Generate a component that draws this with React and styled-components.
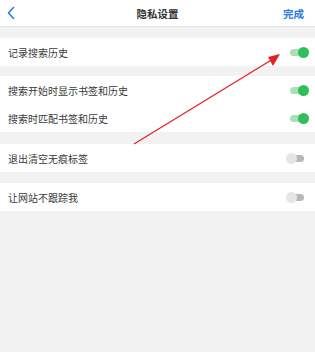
import React from "react";
import styled, { createGlobalStyle } from "styled-components";

const Global = createGlobalStyle`
  html, body { margin: 0; padding: 0; background: #f2f2f2; }
  body { font-family: "Noto Sans CJK SC", "Noto Sans", sans-serif; }
`;

const Page = styled.div`
  position: relative;
  width: 315px;
  height: 352px;
  background: #f2f2f2;
  overflow: hidden;
`;

const Header = styled.div`
  height: 26px;
  background: #fff;
  border-bottom: 1px solid #e2e2e2;
  display: grid;
  grid-template-columns: 40px 1fr 40px;
  align-items: center;
`;

const Back = styled.div`
  display: flex;
  align-items: center;
  padding-left: 6px;
`;

const Title = styled.div`
  text-align: center;
  font-size: 10.5px;
  font-weight: 700;
  color: #333;
`;

const Done = styled.div`
  text-align: right;
  padding-right: 11px;
  font-size: 10.5px;
  font-weight: 700;
  color: #2b7be4;
`;

const Section = styled.div`
  margin-top: ${(p) => p.$gap}px;
  background: #fff;
`;

const Row = styled.div`
  height: 28px;
  display: flex;
  align-items: center;
  justify-content: space-between;
  padding: 0 5px 0 8px;
`;

const Label = styled.span`
  font-size: 10px;
  color: #3a3a3a;
`;

const Switch = styled.div`
  position: relative;
  width: 24px;
  height: 11px;
`;

const Track = styled.div`
  position: absolute;
  top: 2px;
  height: 7px;
  border-radius: 4px;
  left: ${(p) => (p.$on ? "4px" : "5px")};
  width: ${(p) => (p.$on ? "16px" : "13px")};
  background: ${(p) => (p.$on ? "#a9e0b8" : "#b8b8b8")};
`;

const Thumb = styled.div`
  position: absolute;
  top: 0;
  left: ${(p) => (p.$on ? "12px" : "0")};
  width: 11px;
  height: 11px;
  border-radius: 50%;
  background: ${(p) => (p.$on ? "#2fbe5a" : "#e6e6e6")};
`;

const Arrow = styled.svg`
  position: absolute;
  left: 0;
  top: 0;
  pointer-events: none;
`;

function Toggle({ on }) {
  return (
    <Switch>
      <Track $on={on} />
      <Thumb $on={on} />
    </Switch>
  );
}

const groups = [
  { gap: 11, rows: [{ t: "记录搜索历史", on: true }] },
  {
    gap: 10,
    rows: [
      { t: "搜索开始时显示书签和历史", on: true },
      { t: "搜索时匹配书签和历史", on: true },
    ],
  },
  { gap: 12, rows: [{ t: "退出清空无痕标签", on: false }] },
  { gap: 11, rows: [{ t: "让网站不跟踪我", on: false }] },
];

export default function App() {
  return (
    <Page>
      <Global />
      <Header>
        <Back>
          <svg width="10" height="14" viewBox="0 0 10 14">
            <path d="M7.5 1.5 L2.5 7 L7.5 12.5" fill="none" stroke="#2b7be4" strokeWidth="1.6" strokeLinecap="round" strokeLinejoin="round" />
          </svg>
        </Back>
        <Title>隐私设置</Title>
        <Done>完成</Done>
      </Header>
      {groups.map((g, i) => (
        <Section key={i} $gap={g.gap}>
          {g.rows.map((r) => (
            <Row key={r.t}>
              <Label>{r.t}</Label>
              <Toggle on={r.on} />
            </Row>
          ))}
        </Section>
      ))}
      <Arrow width="315" height="352" viewBox="0 0 315 352">
        <line x1="134" y1="144" x2="273" y2="59" stroke="#e32222" strokeWidth="1.3" />
        <polygon points="280,54 268,57 273,66" fill="#e32222" />
      </Arrow>
    </Page>
  );
}
